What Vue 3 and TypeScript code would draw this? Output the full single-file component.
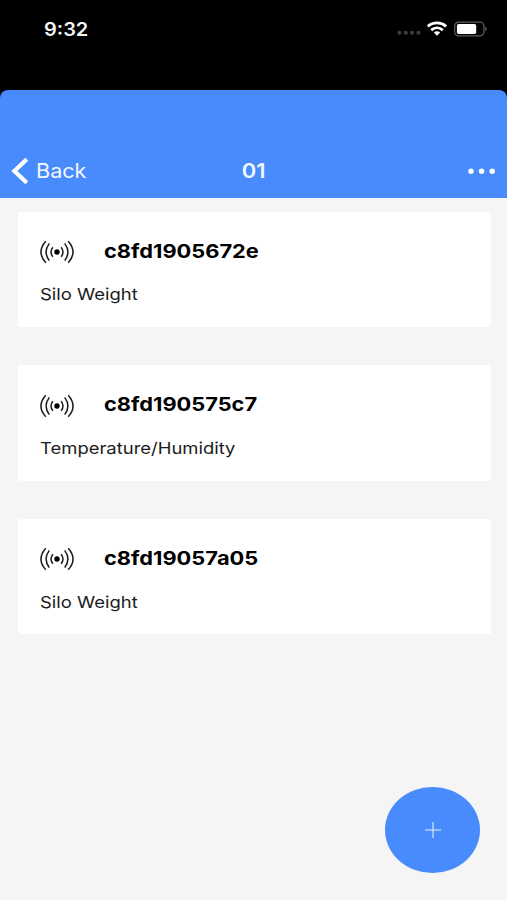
<script setup lang="ts">
interface Device {
  id: string
  kind: string
}

const devices: Device[] = [
  { id: 'c8fd1905672e', kind: 'Silo Weight' },
  { id: 'c8fd190575c7', kind: 'Temperature/Humidity' },
  { id: 'c8fd19057a05', kind: 'Silo Weight' },
]
</script>

<template>
  <div class="screen">
    <div class="status">
      <span class="time">9:32</span>
      <div class="indicators">
        <svg class="dots" width="24" height="6" viewBox="0 0 24 6" fill="#3f3f3f">
          <circle cx="2.4" cy="2.7" r="2" /><circle cx="8.8" cy="2.7" r="2" />
          <circle cx="15" cy="2.7" r="2" /><circle cx="21.4" cy="2.7" r="2" />
        </svg>
        <svg class="wifi" width="20" height="15" viewBox="0 0 20 15">
          <g fill="none" stroke="#fff" stroke-width="2.8">
            <path d="M.9 5.4C6 .8 14 .8 19.1 5.4" />
            <path d="M4.2 9.1C7.7 6 12.3 6 15.8 9.1" />
          </g>
          <path d="M6.8 11.5C8.7 9.8 11.3 9.8 13.2 11.5L10 14.7Z" fill="#fff" />
        </svg>
        <svg class="battery" width="34" height="16" viewBox="0 0 34 16">
          <rect x=".7" y="1.1" width="29.2" height="13.8" rx="4" fill="none" stroke="#5c5c5c" stroke-width="1.2" />
          <rect x="2.9" y="3.1" width="19.3" height="10" rx="1.8" fill="#fff" />
          <path d="M31.2 5.5C33.2 6.5 33.2 9.5 31.2 10.5Z" fill="#5c5c5c" />
        </svg>
      </div>
    </div>
    <header class="bar">
      <button class="back">
        <svg width="18" height="28" viewBox="0 0 18 28" fill="none" stroke="#fff" stroke-width="4.2">
          <path d="M15.8 2.2L3.4 14L15.8 25.8" />
        </svg>
        <span class="back-label">Back</span>
      </button>
      <h1 class="title">01</h1>
      <button class="more">
        <svg width="28" height="6" viewBox="0 0 28 6" fill="#fff">
          <circle cx="3" cy="3.3" r="2.7" /><circle cx="13.6" cy="3.3" r="2.7" /><circle cx="24.2" cy="3.3" r="2.7" />
        </svg>
      </button>
    </header>
    <main class="list">
      <article v-for="d in devices" :key="d.id" class="card">
        <div class="row">
          <svg class="signal" width="36" height="24" viewBox="0 0 36 24" fill="none" stroke="#1c1c1c" stroke-width="1.5">
            <circle cx="18" cy="12" r="2.7" fill="#000" stroke="none" />
            <path d="M13.9 7.2Q10.1 12 13.9 16.8M22.1 7.2Q25.9 12 22.1 16.8" />
            <path d="M10.3 3.4Q3.9 12 10.3 20.6M25.7 3.4Q32.1 12 25.7 20.6" />
            <path d="M6.8 1.2Q-2.9 12 6.8 22.8M29.2 1.2Q38.9 12 29.2 22.8" />
          </svg>
          <h2 class="id">{{ d.id }}</h2>
        </div>
        <p class="kind">{{ d.kind }}</p>
      </article>
    </main>
    <button class="fab">
      <svg width="16" height="16" viewBox="0 0 16 16" stroke="#e4efff" stroke-width="1.1">
        <path d="M8 0V16M0 8H16" />
      </svg>
    </button>
  </div>
</template>

<style>
body {
  margin: 0;
  background: #000;
}
</style>

<style scoped>
.screen {
  position: relative;
  box-sizing: border-box;
  width: 507px;
  height: 900px;
  overflow: hidden;
  background: #f5f5f5;
  font-family: Inter, "Liberation Sans", sans-serif;
  color: #000;
}
button {
  padding: 0;
  border: 0;
  background: none;
  color: inherit;
  font: inherit;
}
h1, h2, p {
  margin: 0;
}
.status {
  display: flex;
  justify-content: space-between;
  box-sizing: border-box;
  height: 100px;
  padding: 17px 19px 0 43.6px;
  background: #000;
  color: #f4f4f4;
}
.time {
  margin-top: 1px;
  font-size: 18px;
  font-weight: 600;
  line-height: 24px;
  transform: scaleX(1.11);
  transform-origin: left;
}
.indicators {
  display: flex;
  align-items: flex-start;
}
.dots {
  margin-top: 13.4px;
}
.wifi {
  margin: 4px 0 0 6px;
}
.battery {
  margin: 4px 0 0 7px;
}
.bar {
  position: relative;
  display: grid;
  grid-template-columns: 1fr auto 1fr;
  align-items: center;
  box-sizing: border-box;
  height: 108px;
  margin-top: -10px;
  padding: 54px 11px 0;
  border-radius: 8px 8px 0 0;
  background: #488bfd;
  color: #f3f8ff;
}
.back {
  display: flex;
  align-items: center;
  justify-self: start;
  gap: 7px;
}
.back-label {
  font-size: 20px;
  line-height: 28px;
  transform: scaleX(1.08);
  transform-origin: left;
}
.title {
  font-size: 20.5px;
  font-weight: 600;
  line-height: 28px;
  transform: translateX(0.6px) scaleX(1.07);
}
.more {
  display: flex;
  justify-self: end;
}
.list {
  display: flex;
  flex-direction: column;
  gap: 38.5px;
  padding: 13.7px 16px 0 17.5px;
}
.card {
  box-sizing: border-box;
  height: 115.2px;
  padding: 26.4px 21.2px 0;
  border-radius: 3px;
  background: #fff;
}
.row {
  display: flex;
  align-items: center;
  height: 26px;
}
.signal {
  margin-top: 2px;
}
.id {
  margin: 1px 0 0 29.8px;
  font-size: 19px;
  font-weight: 700;
  line-height: 26px;
  white-space: nowrap;
  transform: scaleX(1.148);
  transform-origin: left;
}
.kind {
  margin: 18.2px 0 0 1.4px;
  font-size: 16.5px;
  line-height: 24px;
  color: #1c1c1c;
  transform: scaleX(1.118);
  transform-origin: left;
}
.fab {
  position: absolute;
  right: 26.6px;
  bottom: 27px;
  display: flex;
  align-items: center;
  justify-content: center;
  width: 95px;
  height: 86px;
  border-radius: 50%;
  background: #488bfd;
}
</style>
